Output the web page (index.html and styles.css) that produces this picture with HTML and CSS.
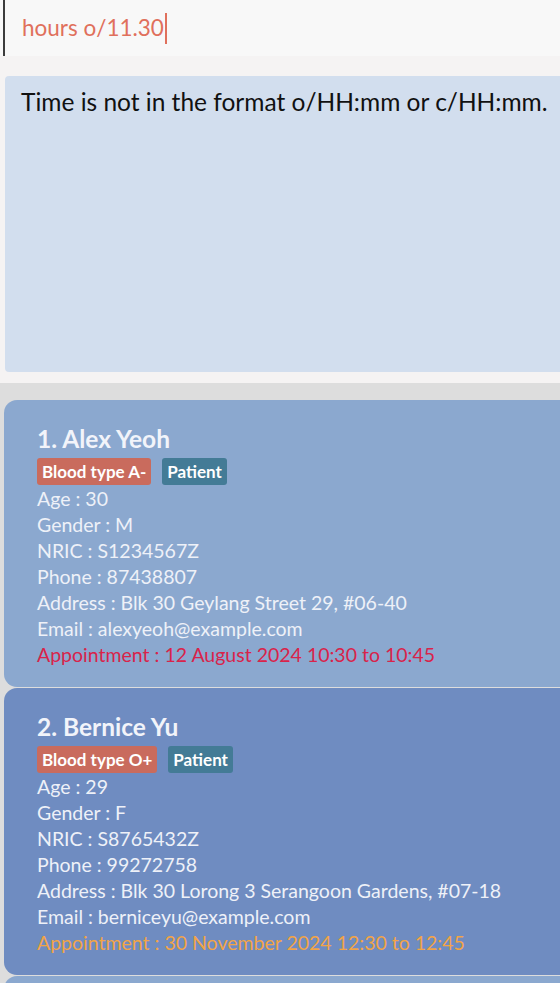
FILE: index.html
```html
<!DOCTYPE html>
<html>
<head>
<meta charset="utf-8">
<link rel="stylesheet" href="styles.css">
</head>
<body>
<div class="app">
  <div class="command-wrap">
    <div class="command"><span class="cmd-text">hours o/11.30</span><span class="caret"></span></div>
  </div>
  <div class="result-wrap">
    <div class="result">Time is not in the format o/HH:mm or c/HH:mm.</div>
  </div>
  <div class="list">
    <div class="card card-light">
      <div class="name">1. Alex Yeoh</div>
      <div class="tags"><span class="tag tag-blood">Blood type A-</span><span class="tag tag-role">Patient</span></div>
      <div class="field">Age : 30</div>
      <div class="field">Gender : M</div>
      <div class="field">NRIC : S1234567Z</div>
      <div class="field">Phone : 87438807</div>
      <div class="field">Address : Blk 30 Geylang Street 29, #06-40</div>
      <div class="field">Email : alexyeoh@example.com</div>
      <div class="field appt-red">Appointment : 12 August 2024 10:30 to 10:45</div>
    </div>
    <div class="card card-dark">
      <div class="name">2. Bernice Yu</div>
      <div class="tags"><span class="tag tag-blood">Blood type O+</span><span class="tag tag-role">Patient</span></div>
      <div class="field">Age : 29</div>
      <div class="field">Gender : F</div>
      <div class="field">NRIC : S8765432Z</div>
      <div class="field">Phone : 99272758</div>
      <div class="field">Address : Blk 30 Lorong 3 Serangoon Gardens, #07-18</div>
      <div class="field">Email : berniceyu@example.com</div>
      <div class="field appt-orange">Appointment : 30 November 2024 12:30 to 12:45</div>
    </div>
    <div class="card card-light"></div>
  </div>
</div>
</body>
</html>
```
FILE: styles.css
```css
html, body {
  margin: 0;
  padding: 0;
  width: 560px;
  height: 983px;
  overflow: hidden;
  background: #f5f3f3;
  font-family: Lato, "Noto Sans", sans-serif;
}
.app {
  display: flex;
  flex-direction: column;
  height: 983px;
  overflow: hidden;
}
.command-wrap {
  background: #f8f8f8;
  height: 56px;
  flex: none;
  padding-left: 3px;
  box-sizing: border-box;
}
.command {
  height: 56px;
  border-left: 2px solid #3c3c3c;
  padding-left: 17px;
  display: flex;
  align-items: center;
  box-sizing: border-box;
}
.cmd-text {
  font-size: 22.5px;
  color: #e0705c;
  line-height: 30px;
}
.caret {
  display: inline-block;
  width: 2px;
  height: 31px;
  background: #e0705c;
  margin-left: 1px;
}
.result-wrap {
  flex: none;
  padding: 20px 0 11px 5px;
}
.result {
  height: 296px;
  background: #d2deee;
  border-radius: 4px 0 0 4px;
  padding: 11px 0 0 16px;
  box-sizing: border-box;
  font-size: 24.5px;
  color: #111;
  line-height: 30px;
}
.list {
  flex: 1;
  min-height: 0;
  background: #dddddd;
  padding: 17px 0 0 4px;
  display: flex;
  flex-direction: column;
  gap: 1px;
  overflow: hidden;
}
.card {
  width: 580px;
  height: 287px;
  flex: none;
  border-radius: 13px;
  padding: 23px 0 0 33px;
  box-sizing: border-box;
  color: #eef1f8;
}
.card-light { background: #8ba8cf; }
.card-dark { background: #6f8cc1; }
.name {
  font-size: 24.5px;
  font-weight: 700;
  line-height: 31px;
  color: #f2f4fa;
}
.tags {
  display: flex;
  gap: 11px;
  margin: 4px 0 1px;
}
.tag {
  font-size: 17px;
  font-weight: 700;
  color: #fff;
  line-height: 27px;
  padding: 0 5px;
  border-radius: 3px;
}
.tag-blood { background: #c96b5d; }
.tag-role { background: #437b96; }
.field {
  font-size: 19.5px;
  line-height: 26px;
}
.appt-red { color: #d9234a; }
.appt-orange { color: #f2a446; }
```
